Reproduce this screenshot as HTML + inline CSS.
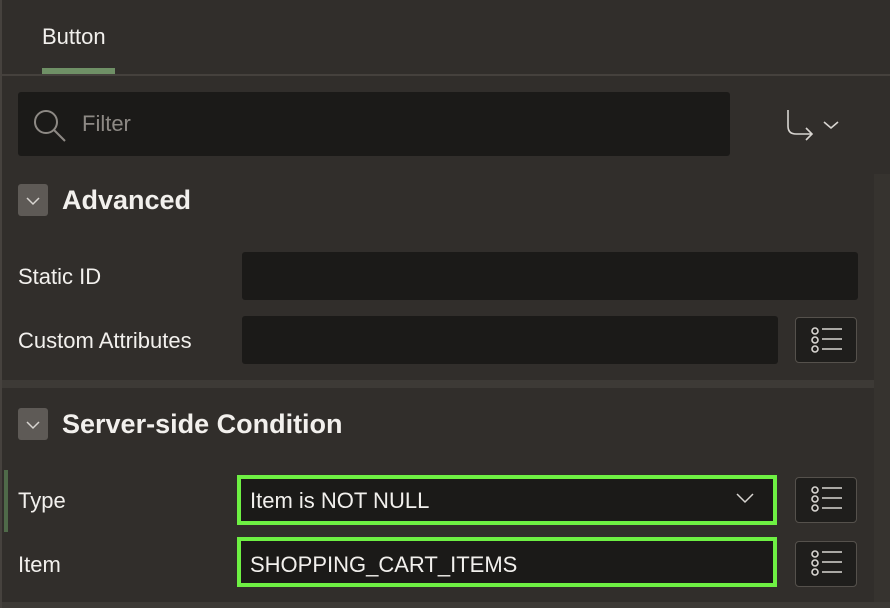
<!DOCTYPE html>
<html><head><style>
*{margin:0;padding:0;box-sizing:border-box}
body{width:890px;height:608px;background:#312e2b;font-family:"Liberation Sans",sans-serif;color:#f2f0ed;position:relative;overflow:hidden}
.a{position:absolute}
.lbl{font-size:22px;color:#f2f0ed}
.inp{background:#1b1a18;border-radius:3px}
.hdr{font-size:27px;font-weight:bold}
.chev{width:30px;height:32px;background:#5e5a56;border-radius:3px}
.lb{width:62px;height:46px;border:1px solid #55514c;border-radius:4px;background:#1f1e1c}
.g{border:4px solid #6ef043;background:#1b1a18}
</style></head><body>
<div class="a" style="left:0;top:0;width:2px;height:608px;background:#46423e"></div>
<div class="a" style="left:42px;top:24px;font-size:22px">Button</div>
<div class="a" style="left:42px;top:68px;width:73px;height:6px;background:#6f9066"></div>
<div class="a" style="left:2px;top:74px;width:888px;height:2px;background:#45413d"></div>
<div class="a inp" style="left:18px;top:92px;width:712px;height:64px"></div>
<svg class="a" style="left:32px;top:108px" width="36" height="34"><circle cx="14" cy="14" r="11" fill="none" stroke="#8d8984" stroke-width="2"/><line x1="22" y1="22" x2="33" y2="33" stroke="#8d8984" stroke-width="2"/></svg>
<div class="a" style="left:82px;top:111px;font-size:22px;color:#8d8984">Filter</div>
<svg class="a" style="left:784px;top:108px" width="64" height="34"><path d="M4 2 V18 Q4 26 12 26 H28 M22 20 L28 26 L22 32" fill="none" stroke="#d8d5d1" stroke-width="1.6"/><path d="M40 14 L47 20 L54 14" fill="none" stroke="#d8d5d1" stroke-width="1.6"/></svg>
<div class="a" style="left:874px;top:174px;width:16px;height:434px;background:#36332f"></div>
<div class="a chev" style="left:18px;top:184px"></div>
<svg class="a" style="left:18px;top:184px" width="30" height="32"><path d="M9 14 L15 20 L21 14" fill="none" stroke="#d8d5d1" stroke-width="1.5"/></svg>
<div class="a hdr" style="left:62px;top:185px">Advanced</div>
<div class="a lbl" style="left:18px;top:264px">Static ID</div>
<div class="a inp" style="left:242px;top:252px;width:616px;height:48px"></div>
<div class="a lbl" style="left:18px;top:328px">Custom Attributes</div>
<div class="a inp" style="left:242px;top:316px;width:536px;height:48px"></div>
<div class="a lb" style="left:795px;top:317px"></div>
<svg class="a" style="left:795px;top:317px" width="62" height="46"><g fill="none" stroke="#d8d5d1" stroke-width="1.6"><circle cx="20" cy="14" r="3"/><circle cx="20" cy="23" r="3"/><circle cx="20" cy="32" r="3"/><path d="M27 12 H47 M27 22 H47 M27 32 H47"/></g></svg>
<div class="a" style="left:2px;top:380px;width:872px;height:8px;background:#3d3a36"></div>
<div class="a chev" style="left:18px;top:408px"></div>
<svg class="a" style="left:18px;top:408px" width="30" height="32"><path d="M9 14 L15 20 L21 14" fill="none" stroke="#d8d5d1" stroke-width="1.5"/></svg>
<div class="a hdr" style="left:62px;top:409px">Server-side Condition</div>
<div class="a" style="left:4px;top:470px;width:4px;height:62px;background:#4f6a49"></div>
<div class="a lbl" style="left:18px;top:488px">Type</div>
<div class="a g" style="left:237px;top:475px;width:540px;height:50px"></div>
<div class="a lbl" style="left:250px;top:488px">Item is NOT NULL</div>
<svg class="a" style="left:734px;top:490px" width="22" height="16"><path d="M3 4 L11 12 L19 4" fill="none" stroke="#d8d5d1" stroke-width="1.5"/></svg>
<div class="a lb" style="left:795px;top:477px"></div>
<svg class="a" style="left:795px;top:477px" width="62" height="46"><g fill="none" stroke="#d8d5d1" stroke-width="1.6"><circle cx="20" cy="13" r="3"/><circle cx="20" cy="22" r="3"/><circle cx="20" cy="31" r="3"/><path d="M27 11 H47 M27 21 H47 M27 31 H47"/></g></svg>
<div class="a lbl" style="left:18px;top:552px">Item</div>
<div class="a g" style="left:237px;top:537px;width:540px;height:50px"></div>
<div class="a lbl" style="left:250px;top:552px">SHOPPING_CART_ITEMS</div>
<div class="a lb" style="left:795px;top:541px"></div>
<svg class="a" style="left:795px;top:541px" width="62" height="46"><g fill="none" stroke="#d8d5d1" stroke-width="1.6"><circle cx="20" cy="13" r="3"/><circle cx="20" cy="22" r="3"/><circle cx="20" cy="31" r="3"/><path d="M27 11 H47 M27 21 H47 M27 31 H47"/></g></svg>
<div class="a" style="left:2px;top:602px;width:888px;height:6px;background:#3d3a36"></div>
</body></html>
